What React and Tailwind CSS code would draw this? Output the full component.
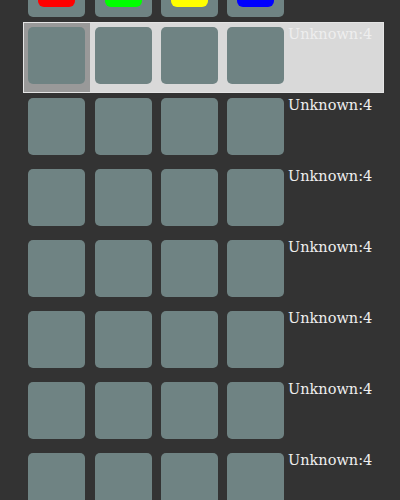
const tabColors = ['bg-[#ff0000]', 'bg-[#00ff00]', 'bg-[#ffff00]', 'bg-[#0000ff]']

const Square = ({ children }) => (
    <div className="relative w-[57px] h-[57px] rounded-[5px] bg-[#6f8383] overflow-hidden">
        {children}
    </div>
)

const Cells = ({ highlighted, top }) => (
    <div className="flex">
        {[0, 1, 2, 3].map((i) => (
            <div
                key={i}
                className={`w-[66px] ${i === 0 ? 'pl-[4px]' : 'pl-[5px]'} ${
                    highlighted && i === 0 ? 'bg-[#999999]' : ''
                } ${top ? '' : 'pt-[4px] h-[69px]'}`}
            >
                <Square>
                    {top && (
                        <div
                            className={`absolute left-[10px] bottom-[10px] w-[37px] h-[40px] rounded-[6px] ${tabColors[i]}`}
                        ></div>
                    )}
                </Square>
            </div>
        ))}
    </div>
)

const Row = ({ highlighted }) => (
    <div
        className={`flex ml-[23px] w-[361px] h-[71px] border ${
            highlighted ? 'border-[#e4e4e4] bg-[#d9d9d9]' : 'border-transparent'
        }`}
    >
        <Cells highlighted={highlighted} />
        <div className="pt-[3px] text-[14.5px] leading-[17px] text-[#eeeeee] font-['DejaVu_Serif',serif]">
            Unknown:4
        </div>
    </div>
)

export default function App() {
    return (
        <div className="w-[400px] h-[500px] bg-[#333333] overflow-hidden">
            {/* tab strip, mostly scrolled off */}
            <div className="flex items-end h-[22px] pb-[5px] ml-[24px] overflow-hidden">
                <Cells top />
            </div>
            <Row highlighted />
            {[0, 1, 2, 3, 4, 5].map((i) => (
                <Row key={i} />
            ))}
        </div>
    )
}
